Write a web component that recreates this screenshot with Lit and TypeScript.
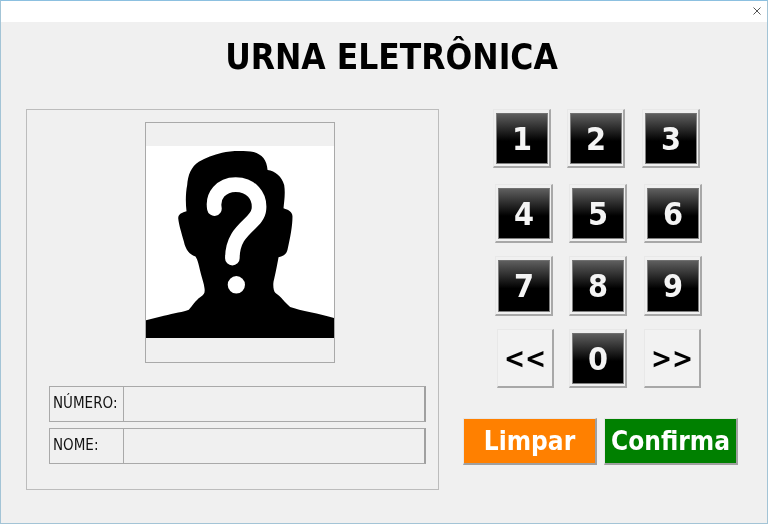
import { LitElement, html, css } from "lit";
import { customElement } from "lit/decorators.js";

const FONT = css`"DejaVu Sans Condensed", "DejaVu Sans", sans-serif`;

@customElement("app-root")
export class AppRoot extends LitElement {
  static styles = css`
    :host {
      display: block;
      width: 768px;
      height: 524px;
      font-family: ${FONT};
      font-stretch: condensed;
      color: #000;
    }
    * { box-sizing: border-box; }
    .window {
      width: 768px;
      height: 524px;
      background: #f0f0f0;
      border: 1px solid #a3c4d6;
      border-top-color: #8cc0e0;
      display: flex;
      flex-direction: column;
      filter: blur(0.35px);
    }
    .titlebar {
      height: 21px;
      background: #fff;
      display: flex;
      align-items: center;
      justify-content: flex-end;
      padding: 0 6px 2px 0;
    }
    .close { width: 8px; height: 8px; display: block; }
    .heading {
      height: 87px;
      display: flex;
      justify-content: center;
      padding: 15px 0 0 15px;
    }
    h1 {
      margin: 0;
      font-size: 35px;
      line-height: 40px;
      font-weight: 700;
    }
    .main { display: flex; padding-left: 25px; }
    .panel {
      width: 413px;
      height: 381px;
      border: 1px solid #bcbcbc;
      padding: 12px 0 0 22px;
      display: flex;
      flex-direction: column;
    }
    .photo {
      width: 190px;
      height: 241px;
      margin-left: 96px;
      border: 1px solid #a9a9a9;
      padding-top: 23px;
    }
    .photo svg { display: block; width: 188px; height: 192px; }
    .fields { margin-top: 23px; display: flex; flex-direction: column; gap: 6px; }
    .field {
      width: 377px;
      height: 36px;
      display: flex;
      border: 1px solid #a9a9a9;
      border-right: 2px solid #a0a0a0;
    }
    .field label {
      width: 74px;
      border-right: 1px solid #a9a9a9;
      padding-left: 3px;
      font-size: 15px;
      line-height: 33px;
      color: #111;
    }
    .pad { margin-left: 54px; display: flex; flex-direction: column; }
    .row { display: flex; }
    .r1 { height: 75px; gap: 16px; }
    .r2 { height: 72px; padding-left: 2px; gap: 16px; }
    .r3 { height: 73px; padding-left: 2px; gap: 16px; }
    .r4 { height: 89px; padding-left: 4px; gap: 15px; }
    .r1 .key:last-child, .r2 .key:last-child, .r3 .key:last-child { margin-left: 1px; }
    .key {
      width: 58px;
      height: 59px;
      padding: 3px 1px 2px 2px;
      background: #f0f0f0;
      border-style: solid;
      border-width: 1px 2px 2px 1px;
      border-color: #e8e8e8 #a8a8a8 #a8a8a8 #e8e8e8;
      font: inherit;
      font-stretch: condensed;
      display: block;
    }
    .r3 .key { height: 60px; }
    .face {
      height: 100%;
      display: flex;
      align-items: center;
      justify-content: center;
      border: 1px solid #808080;
      border-top-color: #707070;
      background: linear-gradient(#5e5e5e 0%, #000 55%, #000 100%);
      color: #f4f4f4;
      font-size: 32px;
      font-weight: 700;
      line-height: 1;
    }
    .arrow {
      width: 57px;
      display: flex;
      align-items: center;
      justify-content: center;
      padding: 0;
      font-size: 28px;
      font-weight: 700;
      color: #000;
      background: #f2f2f2;
    }
    .arrow.next { margin-left: 2px; }
    .actions { display: flex; gap: 7px; margin-left: -30px; }
    .act {
      height: 47px;
      width: 134px;
      border-style: solid;
      border-width: 1px 2px 2px 1px;
      border-color: #e6e6e6 #a0a0a0 #a0a0a0 #e6e6e6;
      color: #fff;
      font: inherit;
      font-stretch: condensed;
      font-size: 26px;
      font-weight: 700;
      padding: 0;
    }
    .limpar { background: #ff8000; }
    .confirma { background: #008000; }
  `;

  private key(n: string) {
    return html`<button class="key"><span class="face">${n}</span></button>`;
  }

  render() {
    return html`
      <div class="window">
        <div class="titlebar">
          <svg class="close" viewBox="0 0 8 8">
            <path d="M.5.5l7 7M7.5.5l-7 7" stroke="#555" stroke-width="1" fill="none" />
          </svg>
        </div>
        <div class="heading"><h1>URNA ELETRÔNICA</h1></div>
        <div class="main">
          <section class="panel">
            <div class="photo">
              <svg viewBox="46 108 566 577" preserveAspectRatio="none">
                <rect x="46" y="108" width="566" height="577" fill="#fff" />
                <path
                  fill="#000"
                  d="M46 685V632L100 618C130 611 160 606 175 600C185 590 195 572 210 562C222 555 224 548 222 535C220 520 216 510 212 495C206 470 202 450 195 440C178 435 165 420 160 395C152 365 145 345 143 325C143 312 155 308 168 304C165 280 165 250 170 225C172 195 182 170 205 155C225 143 250 135 275 128C300 122 345 122 370 126C395 133 410 150 412 180C435 183 455 200 462 225C466 250 462 275 460 295C475 300 487 305 487 320C487 350 480 385 472 420C468 435 458 440 445 442C441 465 435 495 430 515C428 530 430 545 436 550C452 560 465 580 480 592C510 603 570 612 612 625V685Z"
                />
                <path
                  fill="none"
                  stroke="#fff"
                  stroke-width="44"
                  stroke-linecap="round"
                  d="M252 296C245 258 272 224 316 224C362 224 390 258 386 298C382 345 306 355 306 445"
                />
                <circle cx="318" cy="525" r="26" fill="#fff" />
              </svg>
            </div>
            <div class="fields">
              <div class="field"><label>NÚMERO:</label></div>
              <div class="field"><label>NOME:</label></div>
            </div>
          </section>
          <section class="pad">
            <div class="row r1">${["1", "2", "3"].map((n) => this.key(n))}</div>
            <div class="row r2">${["4", "5", "6"].map((n) => this.key(n))}</div>
            <div class="row r3">${["7", "8", "9"].map((n) => this.key(n))}</div>
            <div class="row r4">
              <button class="key arrow">&lt;&lt;</button>
              ${this.key("0")}
              <button class="key arrow next">&gt;&gt;</button>
            </div>
            <div class="actions">
              <button class="act limpar">Limpar</button>
              <button class="act confirma">Confirma</button>
            </div>
          </section>
        </div>
      </div>
    `;
  }
}
